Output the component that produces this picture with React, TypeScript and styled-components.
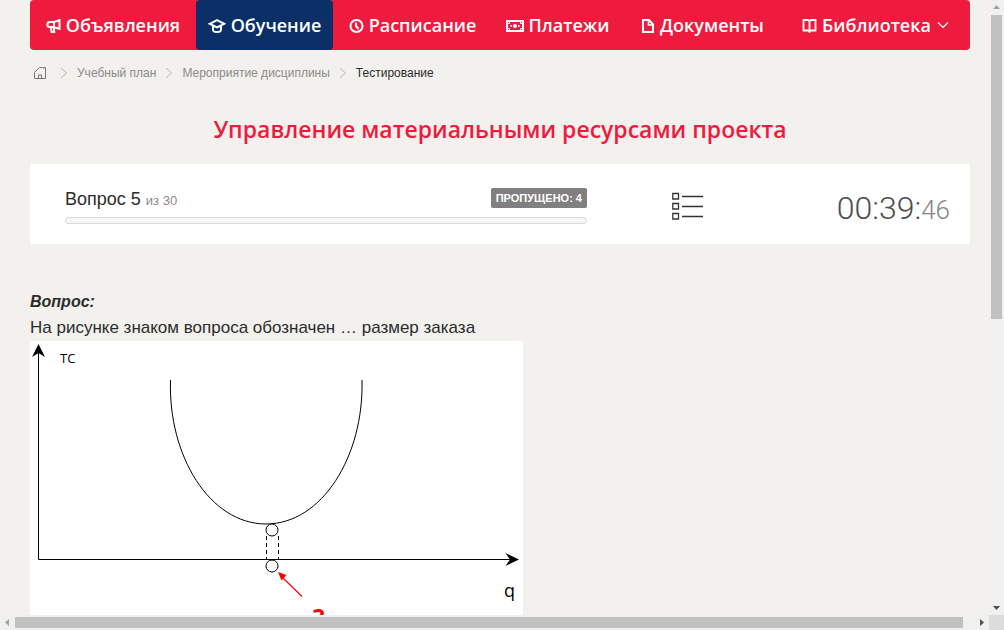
import React from "react";
import styled, { createGlobalStyle, css } from "styled-components";

const GlobalStyle = createGlobalStyle`
  * { box-sizing: border-box; }
  body {
    margin: 0;
    background: #f3f1ed;
    color: #2c2c2c;
    font-family: "Liberation Sans", Arial, sans-serif;
    overflow: hidden;
  }
`;

const display = `"Open Sans", "Noto Sans", sans-serif`;

const Frame = styled.div`
  display: grid;
  grid-template-columns: minmax(0, 1fr) 15px;
  grid-template-rows: minmax(0, 1fr) 15px;
  height: 100vh;
`;

const Viewport = styled.div`
  overflow: hidden;
`;

const Page = styled.div`
  padding: 0 19px 0 30px;
`;

const Nav = styled.nav`
  display: grid;
  grid-template-columns: 166fr 137fr 159fr 131fr 159fr 188fr;
  height: 50px;
  background: #ee1b3e;
  border-radius: 4px;
`;

const NavLink = styled.a<{ $active?: boolean }>`
  display: flex;
  align-items: center;
  justify-content: center;
  gap: 5px;
  border-radius: 4px;
  color: #fff;
  font: 600 18px/50px ${display};
  text-decoration: none;
  white-space: nowrap;
  ${(p) => p.$active && css`background: #0a3067;`}
  svg { flex: none; }
`;

const Crumbs = styled.nav`
  display: flex;
  align-items: center;
  height: 45px;
  padding-left: 3px;
  gap: 9px;
  font-size: 12px;
  white-space: nowrap;
  svg { flex: none; }
`;

const CrumbLink = styled.a`
  display: flex;
  color: #8b8b8a;
  text-decoration: none;
  &:first-child { margin-right: 4px; }
`;

const Title = styled.h1`
  margin: 19px 0 20px;
  color: #ee1b3e;
  font: 600 23px/30px ${display};
  text-align: center;
`;

const Status = styled.section`
  display: grid;
  grid-template-columns: 557fr 201fr 182fr;
  align-items: center;
  height: 80px;
  padding-top: 4px;
  background: #fff;
`;

const Progress = styled.div`
  padding-left: 35px;
`;

const ProgressHead = styled.div`
  display: flex;
  align-items: flex-start;
  justify-content: space-between;
  margin-bottom: 5px;
`;

const Counter = styled.div`
  font-size: 18px;
  line-height: 22px;
  small { color: #8b8b8b; font-size: 13px; }
`;

const Skipped = styled.span`
  padding: 0 5px;
  border-radius: 2px;
  background: #808080;
  color: #fff;
  font-size: 11px;
  font-weight: 700;
  line-height: 20px;
`;

const Track = styled.div`
  height: 7px;
  border: 1px solid #d9d9d9;
  border-radius: 4px;
  background: #f7f7f7;
`;

const ListButton = styled.button`
  justify-self: center;
  display: flex;
  padding: 0;
  border: 0;
  background: none;
  color: #333;
`;

const Timer = styled.time`
  padding: 6px 20px 0 0;
  color: #4c4c4c;
  font: 300 32px/40px Roboto, sans-serif;
  text-align: right;
  small { color: #858585; font-size: 26px; }
`;

const Question = styled.article`
  margin-top: 45px;
  font-size: 17px;
  line-height: 26px;
  h2 {
    margin: 0;
    font-size: 16px;
    font-style: italic;
    line-height: 26px;
  }
  p { margin: 0; }
  svg { display: block; }
`;

const Bar = styled.div<{ $vertical?: boolean }>`
  display: flex;
  flex-direction: ${(p) => (p.$vertical ? "column" : "row")};
  background: #f0f0f0;
`;

const Arrow = styled.button`
  display: flex;
  align-items: center;
  justify-content: center;
  flex: none;
  width: 15px;
  height: 15px;
  padding: 0;
  border: 0;
  background: none;
`;

const Thumb = styled.div<{ $grow: number; $vertical?: boolean }>`
  flex: ${(p) => p.$grow} 1 0;
  margin: ${(p) => (p.$vertical ? "0 2px" : "2px 0")};
  background: #c0c0c0;
`;

const Rest = styled.div<{ $grow: number }>`
  flex: ${(p) => p.$grow} 1 0;
`;

const Corner = styled.div`
  background: #dcdcdc;
`;

const Icon = ({ w = 15, children }: { w?: number; children: React.ReactNode }) => (
  <svg width={w} height="18" viewBox={`0 -2 ${w} 18`} fill="none" stroke="currentColor" strokeWidth="2" aria-hidden="true">
    {children}
  </svg>
);

const Horn = () => (
  <Icon>
    <path d="M13.500 1v11M13.500 2.200L8 4H3.800a2.400 2.400 0 0 0 0 5H8l5.500 2M8 4v5M4.800 9l.8 5h2.600l-.4-5" />
  </Icon>
);
const Cap = () => (
  <Icon w={18}>
    <path d="M1.800 5.800L9 2.200l7.200 3.600L9 9.400zM5 8v3.500c0 3.400 8 3.400 8 0V8" />
  </Icon>
);
const Clock = () => (
  <Icon>
    <circle cx="7.500" cy="8" r="6" />
    <path d="M7 4.500V8l2.500 3" />
  </Icon>
);
const Money = () => (
  <Icon w={18}>
    <path d="M1 3h16v10H1z" />
    <path d="M2 5.500h1.500V4M14.500 4v1.500H16M2 10.500h1.500V12M14.500 12v-1.500H16" strokeWidth="1" />
    <circle cx="9" cy="8" r="2" fill="currentColor" stroke="none" />
    <path d="M4.500 8H6M12 8h1.500" />
  </Icon>
);
const Doc = () => (
  <Icon w={14}>
    <path d="M2 2h6l4 4.500V14H2z" />
    <path d="M7.500 2v5H12" strokeWidth="1.600" />
  </Icon>
);
const Book = () => (
  <Icon>
    <path d="M1.500 2H6l1.500 1L9 2h4.500v10.500H9l-1.500 1-1.500-1H1.500zM7.500 3v12" strokeWidth="1.800" />
  </Icon>
);

const Chevron = () => (
  <svg width="8" height="12" viewBox="0 0 8 12" fill="none" stroke="#b9b8b6" aria-hidden="true">
    <path d="M1 1l5.500 5L1 11" />
  </svg>
);

const items = [
  { label: "Объявления", icon: <Horn /> },
  { label: "Обучение", icon: <Cap />, active: true },
  { label: "Расписание", icon: <Clock /> },
  { label: "Платежи", icon: <Money /> },
  { label: "Документы", icon: <Doc /> },
  { label: "Библиотека", icon: <Book />, menu: true },
];

const Chart = () => (
  <svg width="493" height="310" viewBox="0 0 493 310" fill="none" stroke="#000" role="img" aria-label="TC, q">
    <path fill="#fff" stroke="none" d="M0 0h493v310H0z" />
    <path d="M8.500 8v210.500H482" />
    <path d="M8.500 3l6.500 13-6.500-4-6.500 4zM489 218.500l-13.500 6.500 4.500-6.500-4.500-6.500z" fill="#000" stroke="none" />
    <path d="M140.500 39C138 115 180 183 236 183S334 115 332 39" />
    <path d="M236.500 195v24M248.500 195v24" strokeDasharray="4 3" />
    <circle cx="242" cy="189" r="6" fill="#fff" />
    <circle cx="242" cy="225" r="6" fill="#fff" />
    <path d="M272 255.500L253 237" stroke="#f00" strokeWidth="1.200" />
    <path d="M248 231l8.500 3-5 5.500z" fill="#f00" stroke="none" />
    <g stroke="none" fill="#000" fontFamily="'Open Sans', sans-serif">
      <text x="30" y="22" fontSize="13">TC</text>
      <text x="474" y="256" fontSize="18">q</text>
      <text x="283" y="285" fontSize="24" fontWeight="700" fill="#f00">?</text>
    </g>
  </svg>
);

const ScrollArrow = ({ d, label, color = "#505050" }: { d: string; label: string; color?: string }) => (
  <Arrow aria-label={label}>
    <svg width="9" height="9" viewBox="0 0 9 9" fill={color}><path d={d} /></svg>
  </Arrow>
);

export default function App() {
  return (
    <Frame>
      <GlobalStyle />
      <Viewport>
        <Page>
          <Nav>
            {items.map((it) => (
              <NavLink key={it.label} href="#" $active={it.active}>
                {it.icon}
                <span>{it.label}</span>
                {it.menu && (
                  <svg width="14" height="8" viewBox="0 0 14 8" fill="none" stroke="currentColor" strokeWidth="1.200">
                    <path d="M2 1.500l5 5 5-5" />
                  </svg>
                )}
              </NavLink>
            ))}
          </Nav>
          <Crumbs>
            <CrumbLink href="#" aria-label="Главная">
              <svg width="14" height="14" viewBox="0 0 14 14" fill="none" stroke="#777">
                <path d="M1.500 12.500v-6l5-5h3l1 1V1.500h2v11zM5.500 12.500V9h3v3.500" />
              </svg>
            </CrumbLink>
            <Chevron />
            <CrumbLink href="#">Учебный план</CrumbLink>
            <Chevron />
            <CrumbLink href="#">Мероприятие дисциплины</CrumbLink>
            <Chevron />
            <span>Тестирование</span>
          </Crumbs>
          <Title>Управление материальными ресурсами проекта</Title>
          <Status>
            <Progress>
              <ProgressHead>
                <Counter>Вопрос 5 <small>из 30</small></Counter>
                <Skipped>ПРОПУЩЕНО: 4</Skipped>
              </ProgressHead>
              <Track role="progressbar" aria-label="Прогресс" aria-valuenow={0} />
            </Progress>
            <ListButton aria-label="Список вопросов">
              <svg width="32" height="28" viewBox="0 0 32 28" fill="none" stroke="currentColor" strokeWidth="1.300">
                <path d="M.8 1.500h5.700v5.500H.8zM.8 11.500h5.700v5.500H.8zM.8 21.500h5.700v5.500H.8zM10 4.500h21M10 14.500h21M10 24.500h21" />
              </svg>
            </ListButton>
            <Timer>00:39:<small>46</small></Timer>
          </Status>
          <Question>
            <h2>Вопрос:</h2>
            <p>На рисунке знаком вопроса обозначен … размер заказа</p>
            <Chart />
          </Question>
        </Page>
      </Viewport>
      <Bar $vertical>
        <ScrollArrow label="Вверх" d="M1 6l3.500-4L8 6z" color="#a0a0a0" />
        <Thumb $vertical $grow={304} />
        <Rest $grow={281} />
        <ScrollArrow label="Вниз" d="M1 3l3.500 4L8 3z" />
      </Bar>
      <Bar>
        <ScrollArrow label="Влево" d="M6 1L2 4.500 6 8z" color="#a0a0a0" />
        <Thumb $grow={948} />
        <Rest $grow={11} />
        <ScrollArrow label="Вправо" d="M3 1l4 3.500L3 8z" />
      </Bar>
      <Corner />
    </Frame>
  );
}
